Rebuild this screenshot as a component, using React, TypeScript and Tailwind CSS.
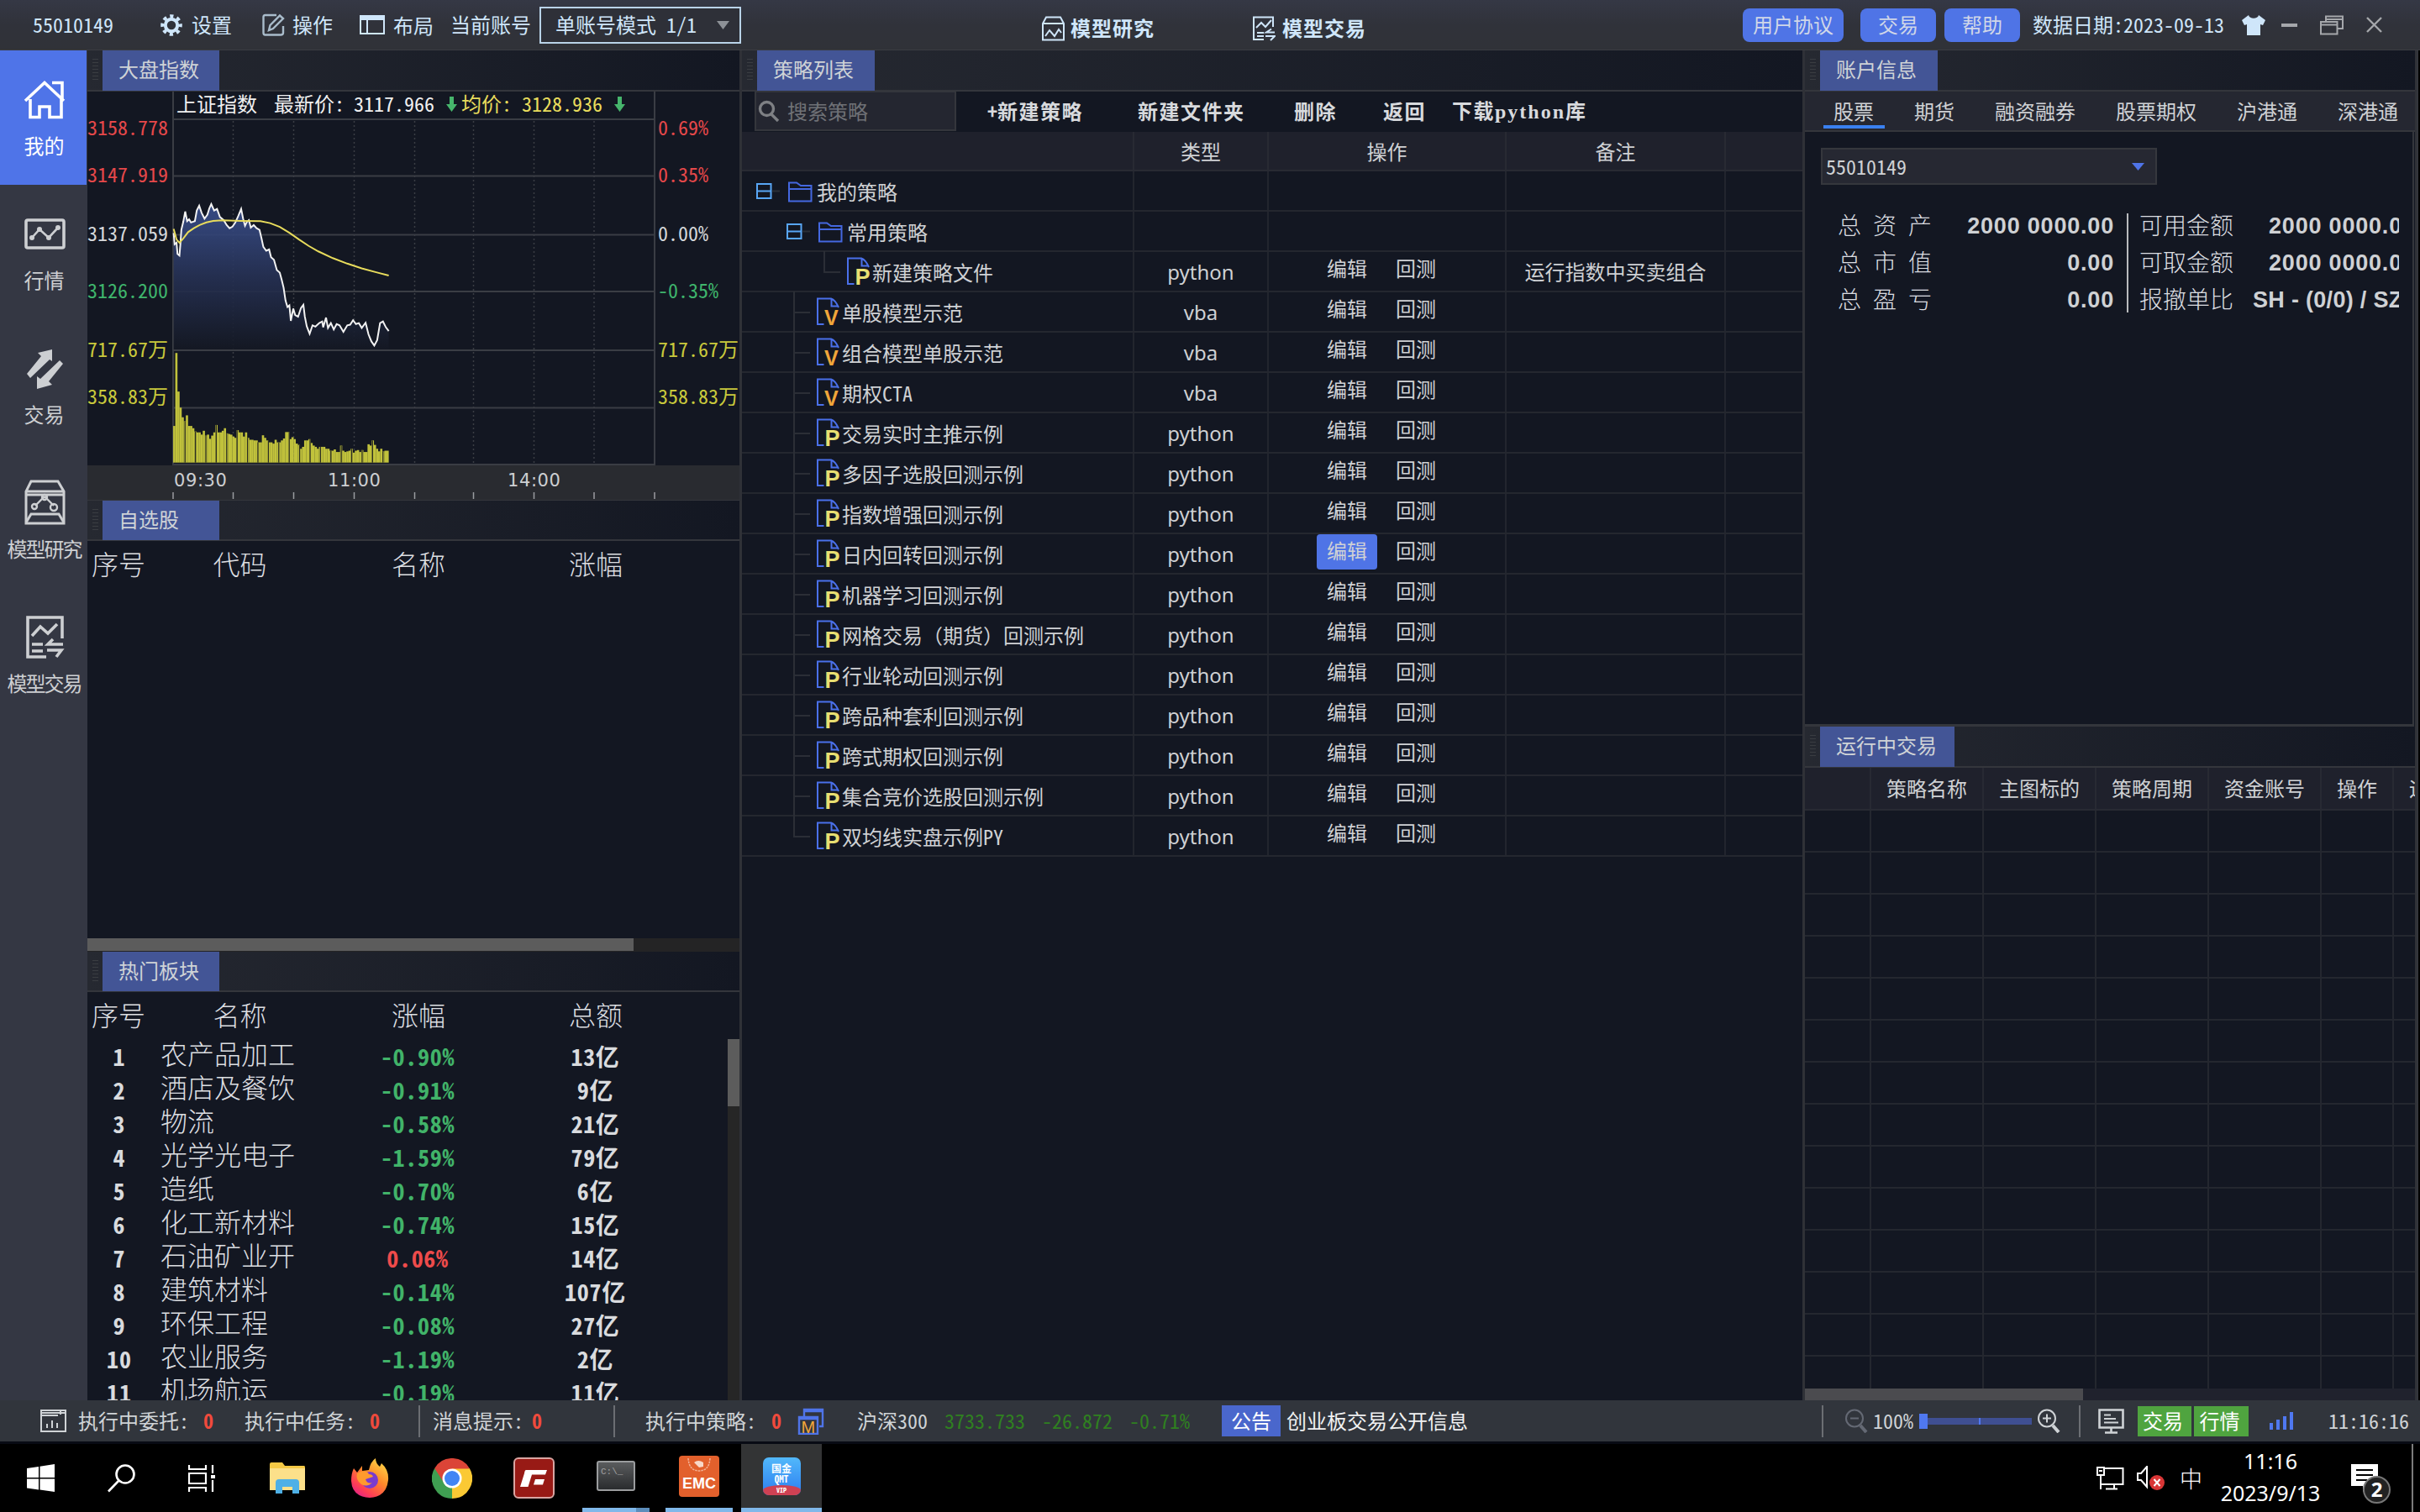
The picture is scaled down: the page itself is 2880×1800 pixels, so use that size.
import React from "react";

const SONG = "font-['Noto_Sans_CJK_SC',sans-serif] [font-feature-settings:'hwid'] font-normal";
const LINE = "bg-[#34363c]";

/* ---------- shared pieces ---------- */

function TitleBar({ text, tab, h = "h-[47px]" }: { text: string; tab: string; h?: string }) {
  return (
    <div className={`flex shrink-0 ${h} border-b-2 border-[#34363c] bg-linear-to-r from-[#262931] to-[#131722]`}>
      <div className="flex w-[18px] shrink-0 items-center justify-center">
        <div className="h-[27px] w-[7px] bg-[repeating-linear-gradient(to_bottom,#3a3d42_0_1px,transparent_1px_4px)]" />
      </div>
      <div className={`-mb-px flex shrink-0 items-center bg-[#435596] pb-[3px] pl-[19px] text-[#cfd3d6] ${tab}`}>
        {text}
      </div>
    </div>
  );
}

/* ---------- top bar ---------- */

function Gear() {
  return (
    <svg width="26" height="26" viewBox="0 0 26 26" fill="none" stroke="#cfe6fa">
      <circle cx="13" cy="13" r="7.2" strokeWidth="4" />
      <circle cx="13" cy="13" r="10.8" strokeWidth="4" strokeDasharray="4.2 4.28" strokeDashoffset="2.1" />
    </svg>
  );
}

function TopBar() {
  const button = "flex h-[40px] items-center justify-center rounded-lg bg-[#4f74e6] pb-px text-[#d0d7e8]";
  return (
    <header className="flex h-[60px] shrink-0 items-center border-b border-[#3a3c42] bg-linear-to-b from-[#353845] via-[#30323a] to-[#303238] text-[#cfe6fa]">
      <span className="ml-[39px] w-[152px]">55010149</span>
      <Gear />
      <span className="ml-[11px] w-[84px]">设置</span>
      <svg width="27" height="27" viewBox="0 0 27 27" fill="none" stroke="#a9bccb" strokeWidth="2.4">
        <path d="M17 2H3.500Q1.500 2 1.500 4V23Q1.500 25.500 3.500 25.500H22Q25 25.500 25 23V15" />
        <path d="M8 20l1.500-6L21 2.500l4 3.500L13 18z" />
      </svg>
      <span className="ml-[9px] w-[80px]">操作</span>
      <svg width="30" height="23" viewBox="0 0 30 23" fill="none" stroke="#cfe6fa" strokeWidth="2">
        <rect x="1" y="1" width="28" height="21" />
        <path d="M1 3h28M1 5h28M9 5v17" />
      </svg>
      <span className="mt-[2px] ml-[10px] w-[68px]">布局</span>
      <span className="w-[106px]">当前账号</span>
      <div className="flex h-[44px] w-[240px] items-center justify-between border-2 border-[#b9d3e8] bg-[#2e3038] pr-[12px] pl-[17px]">
        <span>单账号模式 1/1</span>
        <svg width="15" height="10" viewBox="0 0 15 10">
          <path d="M0 0h15L7.500 10z" fill="#8d9197" />
        </svg>
      </div>
      <svg className="mt-[8px] ml-[358px]" width="27" height="30" viewBox="0 0 27 30" fill="none" stroke="#cfe6fa" strokeWidth="2">
        <path d="M1 9L5 1.500H22L26 9V28.500H1ZM1 9H26" />
        <path d="M4 24l5-7 6 7 5-8 3 4" />
      </svg>
      <span className="mt-[8px] ml-[7px] w-[217px] font-bold tracking-[1px]">模型研究</span>
      <svg className="mt-[8px]" width="27" height="30" viewBox="0 0 27 30" fill="none" stroke="#cfe6fa" strokeWidth="2">
        <path d="M24 13V1.500H1V28H13M4 14l6-6 5 5 7-8" />
        <path d="M5 20h8M5 24h8M26 19.500H16l6-4M15 24h11l-5 5" />
      </svg>
      <span className="mt-[8px] ml-[8px] w-[548px] font-bold tracking-[1px]">模型交易</span>
      <div className={`${button} w-[120px]`}>用户协议</div>
      <div className={`${button} ml-[20px] w-[90px]`}>交易</div>
      <div className={`${button} ml-[10px] w-[90px]`}>帮助</div>
      <span className="ml-[15px] w-[249px]">数据日期:2023-09-13</span>
      <svg width="28" height="24" viewBox="0 0 28 24" fill="#cfe6fa">
        <path d="M8 0l-8 6 3 6 3-1v13h16V11l3 1 3-6-8-6c-1 5-11 5-12 0z" />
      </svg>
      <svg className="ml-[19px]" width="19" height="24" viewBox="0 0 19 24">
        <rect y="10" width="19" height="4" fill="#a5a7ab" />
      </svg>
      <svg className="ml-[27px]" width="28" height="24" viewBox="0 0 28 24" fill="none" stroke="#a5a7ab" strokeWidth="2">
        <path d="M7 7V1.500h20V16h-6M7 5h20M1 8h19.500v14.500H1zM1 11.500h19.500" />
      </svg>
      <svg className="ml-[27px]" width="19" height="19" viewBox="0 0 19 19" stroke="#a5a7ab" strokeWidth="2.4">
        <path d="M1 1l17 17M18 1L1 18" />
      </svg>
    </header>
  );
}

/* ---------- sidebar ---------- */

const NAV: { label: string; icon: React.ReactNode; tight?: boolean }[] = [
  {
    label: "我的",
    icon: (
      <path d="M1 24L24 2.500 47 24M33 2.500H45V22M7 22V43.500H18V31H30V43.500H44V22" strokeWidth="3.600" />
    ),
  },
  {
    label: "行情",
    icon: (
      <g>
        <rect x="2" y="6" width="45" height="33" rx="2" strokeWidth="3.600" />
        <path d="M9 27l9-10 11 10 11-12" strokeWidth="2.600" />
        <g fill="currentColor" stroke="none">
          <circle cx="9" cy="27" r="3" />
          <circle cx="18" cy="17" r="3" />
          <circle cx="29" cy="27" r="3" />
          <circle cx="40" cy="15" r="3" />
        </g>
      </g>
    ),
  },
  {
    label: "交易",
    icon: (
      <g fill="currentColor" stroke="none">
        <path d="M3 29L20 8L16 4L33 0V14L30 12L7 34Z" />
        <path d="M46 17L29 38L33 42L15 47V32L19 35L42 13Z" />
      </g>
    ),
  },
  {
    label: "模型研究",
    tight: true,
    icon: (
      <g strokeWidth="3">
        <path d="M8 -3H40L47 9V47H2V9ZM2 9H47M2 13H47" />
        <path d="M2 46L8 36H41L47 46" />
        <path d="M13 26L23 16L25 16L35 26" strokeWidth="2.400" />
        <circle cx="12" cy="27" r="3" strokeWidth="2.400" />
        <circle cx="24" cy="16" r="3" strokeWidth="2.400" />
        <circle cx="35" cy="28" r="4" strokeWidth="2.400" />
      </g>
    ),
  },
  {
    label: "模型交易",
    tight: true,
    icon: (
      <g strokeWidth="3.600">
        <path d="M45 24V-1H4V46H26" />
        <path d="M9 21l10-11 9 8L39 7" />
        <path d="M9 31H22M9 39H22M46 31H28L34 25M27 38H44L38 46" />
      </g>
    ),
  },
];

function Sidebar() {
  return (
    <nav className="flex w-[104px] shrink-0 flex-col bg-[#343743] text-[#cdcfd2]">
      {NAV.map((n, i) => (
        <div
          key={n.label}
          className={`flex h-[160px] w-[103px] flex-col items-center pl-[2px] ${i === 0 ? "bg-[#4f74e8] text-white" : ""}`}
        >
          <svg className="mt-[36px] overflow-visible" width="48" height="45" viewBox="0 0 48 45" fill="none" stroke="currentColor">
            {n.icon}
          </svg>
          <span className={`mt-[18px] whitespace-nowrap ${n.tight ? "tracking-[-2px]" : ""}`}>{n.label}</span>
        </div>
      ))}
    </nav>
  );
}

/* ---------- index chart ---------- */

const PRICE =
  "360,725 362,760 366,755 368,790 372,795 374,760 376,715 380,690 384,658 388,688 392,682 396,692 404,688 408,655 413,640 418,662 424,680 430,668 434,648 438,635 444,655 450,650 456,675 464,685 470,700 476,710 482,705 488,692 494,672 500,650 504,680 508,702 512,690 516,685 520,708 526,700 532,710 538,715 542,740 546,768 552,780 558,776 562,800 568,808 574,840 580,848 584,870 588,895 592,935 596,955 600,950 603,998 608,960 612,980 618,985 624,958 629,948 632,985 636,1015 642,1038 648,1012 654,1016 662,1005 668,1000 670,1018 676,988 680,1020 686,1005 692,1025 698,1008 704,1012 712,1032 720,1012 726,1010 732,996 738,1008 744,1005 750,1020 758,1004 764,1040 770,1062 776,1075 782,1058 788,1005 794,1000 800,1018 806,1030";
const AVERAGE =
  "360,712 366,745 372,755 380,742 390,722 402,710 414,700 428,692 442,687 460,685 500,687 540,688 560,694 580,706 600,724 620,745 640,765 660,782 690,803 720,820 750,835 780,847 806,857";
const VOLUME = [
  1325, 1098, 1218, 1268, 1298, 1310, 1292, 1325, 1325, 1332, 1342, 1345, 1345, 1352, 1340, 1355, 1352, 1365, 1355, 1345,
  1322, 1345, 1345, 1340, 1332, 1348, 1350, 1352, 1358, 1362, 1338, 1345, 1345, 1358, 1345, 1362, 1368, 1368, 1370, 1370,
  1376, 1376, 1354, 1362, 1370, 1376, 1376, 1380, 1368, 1376, 1376, 1370, 1364, 1344, 1344, 1366, 1360, 1366, 1380, 1384,
  1396, 1390, 1370, 1370, 1366, 1378, 1386, 1390, 1396, 1390, 1390, 1390, 1396, 1396, 1402, 1402, 1398, 1406, 1406, 1386,
  1402, 1406, 1404, 1402, 1396, 1408, 1402, 1400, 1406, 1400, 1406, 1406, 1382, 1386, 1370, 1384, 1396, 1404, 1396, 1404,
  1402, 1402,
];
const GRID_X = [277.500, 349.500, 421.500, 493.500, 563.500, 635.500, 707];
const GRID_Y = [142, 209.500, 279.500, 347, 417, 485.500];
const AXIS: [number, string, string, string][] = [
  [153, "3158.778", "0.69%", "#e5484a"],
  [209, "3147.919", "0.35%", "#e5484a"],
  [279, "3137.059", "0.00%", "#d5d7da"],
  [347, "3126.200", "-0.35%", "#3fb56c"],
  [417, "717.67万", "717.67万", "#c9c93c"],
  [473, "358.83万", "358.83万", "#c9c93c"],
];

function Arrow({ x }: { x: number }) {
  return <path d={`M${x + 4} 115h5v9h4l-6.500 9l-6.500-9h4z`} fill="#46b56c" />;
}

function IndexChart() {
  return (
    <svg className="shrink-0 overflow-visible" width="776" height="487" viewBox="104 109 776 487" fontSize="24">
      <defs>
        <linearGradient id="area" x1="0" y1="0" x2="0" y2="1">
          <stop offset="0" stopColor="#3b5190" />
          <stop offset="0.500" stopColor="#263154" />
          <stop offset="1" stopColor="#141823" />
        </linearGradient>
      </defs>
      <g stroke="#3a3d44" strokeWidth="2" fill="none">
        {GRID_Y.map((y) => (
          <path key={y} d={`M206 ${y}H779`} />
        ))}
        <path d="M206 109V553H779V109" />
        <g strokeDasharray="2 3" strokeWidth="1.500">
          {GRID_X.map((x) => (
            <path key={x} d={`M${x} 144V552`} />
          ))}
        </g>
      </g>
      <g transform="scale(0.574 0.3827)" fill="none">
        <polygon points={`360,1087 ${PRICE} 806,1087`} fill="url(#area)" opacity="0.900" />
        <polyline points={PRICE} stroke="#f2f2f2" strokeWidth="2" vectorEffect="non-scaling-stroke" />
        <polyline points={AVERAGE} stroke="#e8dc5c" strokeWidth="2" vectorEffect="non-scaling-stroke" />
        {VOLUME.map((v, i) => (
          <rect key={i} x={359 + i * 4.380} y={v} width="4.600" height={1439 - v} fill="#c1c23c" />
        ))}
        {Array.from({ length: 20 }, (_, i) => (
          <rect
            key={i}
            x={382.500 + i * 21.600}
            y={VOLUME[5 + Math.round(i * 4.930)]}
            width="2.200"
            height={1439 - VOLUME[5 + Math.round(i * 4.930)]}
            fill="#2c2e22"
          />
        ))}
      </g>
      <g fill="#f0f0f0">
        <text x="210" y="133">上证指数</text>
        <text x="326" y="133">最新价:</text>
        <text x="421" y="133">3117.966</text>
      </g>
      <g fill="#e8dc5c">
        <text x="549" y="133">均价:</text>
        <text x="621" y="133">3128.936</text>
      </g>
      <Arrow x={531} />
      <Arrow x={731} />
      {AXIS.map(([y, l, r, c]) => (
        <g key={y} fill={c}>
          <text x="104" y={y + 8}>{l}</text>
          <text x="783" y={y + 8}>{r}</text>
        </g>
      ))}
      <rect x="104" y="554" width="776" height="41" fill="#292b30" />
      <path d="M104 595.500H880" stroke="#34363c" />
      <g fill="#cdcfd2" fontFamily="DejaVu Sans" fontSize="21" letterSpacing="0.600">
        <text x="207" y="579">09:30</text>
        <text x="390" y="579">11:00</text>
        <text x="604" y="579">14:00</text>
      </g>
      <g stroke="#9b9da0" strokeWidth="1.500">
        {[206, ...GRID_X, 779].map((x) => (
          <path key={x} d={`M${x} 586v8`} />
        ))}
      </g>
    </svg>
  );
}

/* ---------- left column ---------- */

function ListHeader({ cells }: { cells: string[] }) {
  return (
    <div className="flex h-[56px] shrink-0 items-center pb-[3px] text-center text-[32px] font-light text-[#dcdee1]">
      <span className="w-[74px]">{cells[0]}</span>
      <span className="w-[215px]">{cells[1]}</span>
      <span className="w-[210px]">{cells[2]}</span>
      <span className="w-[212px]">{cells[3]}</span>
    </div>
  );
}

const SECTORS: [string, string, string][] = [
  ["农产品加工", "-0.90%", "13亿"],
  ["酒店及餐饮", "-0.91%", "9亿"],
  ["物流", "-0.58%", "21亿"],
  ["光学光电子", "-1.59%", "79亿"],
  ["造纸", "-0.70%", "6亿"],
  ["化工新材料", "-0.74%", "15亿"],
  ["石油矿业开", "0.06%", "14亿"],
  ["建筑材料", "-0.14%", "107亿"],
  ["环保工程", "-0.08%", "27亿"],
  ["农业服务", "-1.19%", "2亿"],
  ["机场航运", "-0.19%", "11亿"],
];

function LeftColumn() {
  return (
    <section className="flex w-[776px] shrink-0 flex-col overflow-hidden bg-[#131722]">
      <TitleBar text="大盘指数" tab="w-[139px]" h="h-[49px]" />
      <IndexChart />
      <TitleBar text="自选股" tab="w-[139px]" h="h-[48px]" />
      <ListHeader cells={["序号", "代码", "名称", "涨幅"]} />
      <div className="flex-1" />
      <div className="h-[16px] shrink-0 bg-[#242425]">
        <div className="h-[15px] w-[650px] bg-[#5c5c5c]" />
      </div>
      <TitleBar text="热门板块" tab="w-[139px]" h="h-[48px]" />
      <ListHeader cells={["序号", "名称", "涨幅", "总额"]} />
      <div className="flex h-[430px] shrink-0 overflow-hidden">
        <div className="w-[762px]">
          {SECTORS.map(([name, pct, sum], i) => (
            <div
              key={name}
              className="flex h-[40px] items-center text-center text-[28px] leading-[32px] font-bold text-[#d9dbde]"
            >
              <span className="w-[76px] tracking-[1px]">{i + 1}</span>
              <span className="-mt-[9px] w-[212px] pl-[11px] text-left text-[32px] font-light text-[#dcdee1]">{name}</span>
              <span className={`w-[210px] tracking-[0.700px] ${pct[0] === "-" ? "text-[#41b369]" : "text-[#ee4b4b]"}`}>
                {pct}
              </span>
              <span className="w-[213px] tracking-[0.700px]">{sum}</span>
            </div>
          ))}
        </div>
        <div className="w-[14px] bg-[#262626]">
          <div className="h-[80px] w-[14px] bg-[#5c5c5c]" />
        </div>
      </div>
    </section>
  );
}

/* ---------- strategy table ---------- */

function Toggle() {
  return (
    <svg className="shrink-0" width="28" height="20" viewBox="0 0 28 20" fill="none" stroke="#58a6f5" strokeWidth="2">
      <path d="M1 1h16.500v17H1zM1 9.500h16.500" />
      <path d="M19 9.500h9" stroke="#2b2e36" />
    </svg>
  );
}

function Folder() {
  return (
    <svg className="shrink-0" width="29" height="25" viewBox="0 0 29 25" fill="none" stroke="#4468e0" strokeWidth="2">
      <path d="M1 23.500V1.500H10L15 5H27.500V23.500ZM1 9H27.500" />
    </svg>
  );
}

function FileIcon({ py }: { py: boolean }) {
  return (
    <svg className="shrink-0 overflow-visible" width="28" height="34" viewBox="0 0 28 34" fill="none" stroke="#4a70ea" strokeWidth="2">
      <path d="M8.500 32H1V1.500H17Q22 3 26 12M17.500 2V10.500H26" />
      <text
        x={py ? 9.500 : 9}
        y={py ? 33 : 32.500}
        stroke="none"
        fill={py ? "#e8df72" : "#f0a63a"}
        fontFamily="Liberation Sans"
        fontWeight="700"
        fontSize={py ? 27 : 25}
      >
        {py ? "P" : "V"}
      </text>
    </svg>
  );
}

const STRATEGIES: [string, string][] = [
  ["单股模型示范", "vba"],
  ["组合模型单股示范", "vba"],
  ["期权CTA", "vba"],
  ["交易实时主推示例", "python"],
  ["多因子选股回测示例", "python"],
  ["指数增强回测示例", "python"],
  ["日内回转回测示例", "python"],
  ["机器学习回测示例", "python"],
  ["网格交易（期货）回测示例", "python"],
  ["行业轮动回测示例", "python"],
  ["跨品种套利回测示例", "python"],
  ["跨式期权回测示例", "python"],
  ["集合竞价选股回测示例", "python"],
  ["双均线实盘示例PY", "python"],
];

function Row({ tree, type, note, active }: { tree: React.ReactNode; type?: string; note?: string; active?: boolean }) {
  const cell = "flex h-full items-center border-r-2 border-[#22252e]";
  return (
    <div className="flex h-[48px] border-b-2 border-[#24272f]">
      <div className={`${cell} w-[467px]`}>{tree}</div>
      <div className={`${cell} w-[160px] justify-center pt-[2px] font-['Noto_Sans',sans-serif]`}>{type}</div>
      <div className={`${cell} w-[283px]`}>
        {type && (
          <>
            <span
              className={`-mt-[4px] ml-[57px] flex h-[42px] w-[72px] items-center justify-center rounded-sm pb-[3px] ${active ? "bg-[#4f74e6]" : ""}`}
            >
              编辑
            </span>
            <span className="-mt-[7px] ml-[22px]">回测</span>
          </>
        )}
      </div>
      <div className={`${cell} w-[261px] justify-center`}>{note}</div>
    </div>
  );
}

function Branch({ last }: { last?: boolean }) {
  return (
    <svg className="shrink-0" width="22" height="48" viewBox="0 0 22 48" stroke="#2b2e36" strokeWidth="2">
      <path d={last ? "M1 0V25H20" : "M1 0V48M1 25H20"} fill="none" />
    </svg>
  );
}

function MiddleColumn() {
  const head = "flex h-full items-center justify-center border-r-2 border-[#282a33] pt-[2px]";
  return (
    <section className="flex w-[1268px] shrink-0 flex-col border-x-[3px] border-[#2f3137] bg-[#131722] text-[#cfd1d4]">
      <TitleBar text="策略列表" tab="w-[140px]" h="h-[49px]" />
      <div className="flex h-[48px] shrink-0 items-center pb-[2px] font-bold tracking-[1.500px] text-[#d8dadd]">
        <div className="ml-[15px] flex h-[48px] w-[240px] items-center border-2 border-[#34363c] bg-[#242630] font-normal tracking-normal text-[#6f7176]">
          <svg className="ml-[2px]" width="26" height="26" viewBox="0 0 26 26" fill="none" stroke="#7e8084" strokeWidth="3.400">
            <circle cx="10.500" cy="10.500" r="8" />
            <path d="M16 17l8 8" />
          </svg>
          <span className="ml-[9px]">搜索策略</span>
        </div>
        <span className="ml-[37px] w-[179px] whitespace-nowrap">
          <span className="tracking-normal">+</span>新建策略
        </span>
        <span className="w-[186px]">新建文件夹</span>
        <span className="w-[106px]">删除</span>
        <span className="w-[82px]">返回</span>
        <span className="whitespace-nowrap">
          下载<span className="font-['Liberation_Serif',serif] tracking-[2px]">python</span>库
        </span>
      </div>
      <div className="flex h-[47px] shrink-0 border-b-2 border-[#282a33] bg-[#1f212c]">
        <div className={`${head} w-[467px]`} />
        <div className={`${head} w-[160px]`}>类型</div>
        <div className={`${head} w-[283px]`}>操作</div>
        <div className={`${head} w-[261px]`}>备注</div>
      </div>
      <Row
        tree={
          <div className="flex items-center pt-[3px] pl-[17px]">
            <Toggle />
            <span className="w-[10px]" />
            <Folder />
            <span className="-mt-px ml-[5px]">我的策略</span>
          </div>
        }
      />
      <Row
        tree={
          <div className="flex items-center pt-[3px] pl-[53px]">
            <Toggle />
            <span className="w-[10px]" />
            <Folder />
            <span className="-mt-px ml-[5px]">常用策略</span>
          </div>
        }
      />
      <Row
        type="python"
        note="运行指数中买卖组合"
        tree={
          <div className="flex items-center pl-[97px]">
            <Branch last />
            <span className="w-[6px]" />
            <FileIcon py />
            <span className="mt-[2px] ml-[2px]">新建策略文件</span>
          </div>
        }
      />
      {STRATEGIES.map(([name, type], i) => (
        <Row
          key={name}
          type={type}
          active={i === 6}
          tree={
            <div className="flex items-center pl-[61px]">
              <Branch last={i === STRATEGIES.length - 1} />
              <span className="w-[6px]" />
              <FileIcon py={type === "python"} />
              <span
                className={`mt-[2px] ml-[2px] whitespace-nowrap ${name.includes("（") ? "[font-feature-settings:normal]" : ""}`}
              >
                {name}
              </span>
            </div>
          }
        />
      ))}
    </section>
  );
}

/* ---------- right column ---------- */

const STATS: [string, string, string, string][] = [
  ["总资产", "2000 0000.00", "可用金额", "2000 0000.00"],
  ["总市值", "0.00", "可取金额", "2000 0000.00"],
  ["总盈亏", "0.00", "报撤单比", "SH - (0/0) / SZ - (0/0)"],
];
const RUN_COLS: [string, string][] = [
  ["", "w-[79px]"],
  ["策略名称", "w-[134px]"],
  ["主图标的", "w-[134px]"],
  ["策略周期", "w-[134px]"],
  ["资金账号", "w-[134px]"],
  ["操作", "w-[86px]"],
];

function RightColumn() {
  const num = "font-['Liberation_Sans',sans-serif] text-[27px] font-bold whitespace-nowrap pt-[2px]";
  return (
    <section className="flex w-[728px] shrink-0 flex-col overflow-hidden border-r-2 border-[#2f3137] bg-[#131722] text-[#cfd1d4]">
      <TitleBar text="账户信息" tab="w-[140px]" h="h-[49px]" />
      <div className="flex h-[48px] shrink-0 gap-[48px] border-b-2 border-[#34363c] bg-[#252731] pl-[34px] whitespace-nowrap">
        {["股票", "期货", "融资融券", "股票期权", "沪港通", "深港通"].map((t, i) => (
          <div key={t} className="relative flex items-center">
            {t}
            {i === 0 && <div className="absolute bottom-[2px] -left-[12px] h-[4px] w-[73px] bg-[#3a80f0]" />}
          </div>
        ))}
      </div>
      <div className="mr-px h-[708px] shrink-0 border-r-2 border-b-[3px] border-[#34363c] pt-[19px] pl-[19px]">
        <div className="flex h-[44px] w-[400px] items-center justify-between border-2 border-[#35373d] bg-[#262832] pr-[13px] pl-[4px]">
          <span>55010149</span>
          <svg width="15" height="9" viewBox="0 0 15 9">
            <path d="M0 0h15L7.500 9z" fill="#4f74e8" />
          </svg>
        </div>
        <div className="mt-[26px] flex w-[688px] overflow-hidden">
          <div className="w-[349px] pl-[20px]">
            {STATS.map(([l, v]) => (
              <div key={l} className="flex h-[44px] items-center justify-between">
                <span className="text-[28px] font-light tracking-[14px] text-[#dcdee1]">{l}</span>
                <span className={`${num} tracking-[0.800px]`}>{v}</span>
              </div>
            ))}
          </div>
          <div className="mt-[8px] ml-[15px] h-[118px] w-[2px] shrink-0 bg-[#b9bbbe]" />
          <div className="w-[322px] overflow-hidden pl-[13px]">
            {STATS.map(([l, , r, v], i) => (
              <div key={l} className="flex h-[44px] items-center">
                <span className="shrink-0 text-[28px] font-light text-[#dcdee1]">{r}</span>
                <span className={`${num} ${i === 2 ? "ml-[23px] tracking-[0.300px]" : "ml-[42px] tracking-[0.800px]"}`}>{v}</span>
              </div>
            ))}
          </div>
        </div>
      </div>
      <TitleBar text="运行中交易" tab="w-[160px]" h="h-[49px]" />
      <div className="flex h-[51px] shrink-0 border-b-2 border-[#282a33] bg-[#1f212c]">
        {RUN_COLS.map(([t, w]) => (
          <div key={t} className={`flex shrink-0 items-center justify-center border-r-2 border-[#282a33] ${w}`}>
            {t}
          </div>
        ))}
        <div className="flex w-[27px] items-center overflow-hidden pl-[18px] whitespace-nowrap">运行</div>
      </div>
      <div className="flex-1 overflow-hidden">
        {Array.from({ length: 14 }, (_, i) => (
          <div key={i} className="flex h-[50px] border-b-2 border-[#24272f]">
            {RUN_COLS.map(([t, w]) => (
              <div key={t} className={`shrink-0 border-r-2 border-[#24272f] ${w}`} />
            ))}
          </div>
        ))}
      </div>
      <div className="h-[14px] shrink-0 bg-[#20222d]">
        <div className="h-[14px] w-[331px] bg-[#4b4b4f]" />
      </div>
    </section>
  );
}

/* ---------- status bar ---------- */

function Magnifier({ plus }: { plus?: boolean }) {
  const c = plus ? "#cfd3d6" : "#646974";
  return (
    <svg width="27" height="29" viewBox="0 0 27 29" fill="none" stroke={c} strokeWidth="2">
      <circle cx="11" cy="11.500" r="10" />
      <path d="M6 11.500h10" />
      {plus && <path d="M11 6.500v10" />}
      <path d="M18 20l7 8" strokeWidth="4" />
    </svg>
  );
}

function StatusBar() {
  const zero = "font-bold text-[#f04a3c]";
  const sep = "h-[38px] w-[2px] bg-[#6b6e73]";
  return (
    <footer className="flex h-[49px] shrink-0 items-center bg-[#31353c] whitespace-nowrap text-[#cfd3d6]">
      <svg className="ml-[48px]" width="31" height="27" viewBox="0 0 31 27" fill="none" stroke="#cfd3d6" strokeWidth="2">
        <path d="M1 1h29v25H1zM1 4h29M1 7h20M8 22v-5M14 22v-9M20 22v-6" />
        <path d="M24 2v4" />
      </svg>
      <span className="ml-[14px] w-[149px]">执行中委托:</span>
      <span className={`${zero} w-[49px]`}>0</span>
      <span className="w-[149px]">执行中任务:</span>
      <span className={`${zero} w-[58px]`}>0</span>
      <div className={sep} />
      <span className="ml-[15px] w-[118px]">消息提示:</span>
      <span className={`${zero} w-[97px]`}>0</span>
      <div className={sep} />
      <span className="ml-[36px] w-[150px]">执行中策略:</span>
      <span className={`${zero} w-[31px]`}>0</span>
      <svg width="32" height="32" viewBox="0 0 32 32" fill="none" stroke="#4f74e8" strokeWidth="2.400">
        <path d="M8 10V2H30V22H26M8 4H30" />
        <path d="M2 11H24V31H2zM2 13H24" />
        <text x="4.500" y="30" fontSize="20" fontFamily="Liberation Sans" fill="#f0a63a" stroke="none">M</text>
      </svg>
      <span className="ml-[39px] w-[104px]">沪深300</span>
      <span className="w-[116px] text-[#2f8020]">3733.733</span>
      <span className="w-[104px] text-[#2f8020]">-26.872</span>
      <span className="w-[110px] text-[#2f8020]">-0.71%</span>
      <div className="flex h-[37px] w-[70px] items-center justify-center bg-[#4a67cc] text-white">公告</div>
      <span className="ml-[7px] w-[637px] text-[#f0f1f2]">创业板交易公开信息</span>
      <div className={sep} />
      <div className="ml-[26px] flex w-[304px] items-center">
        <Magnifier />
        <span className="ml-[6px] w-[55px]">100%</span>
        <div className="h-[18px] w-[10px] bg-[#4f78f0]" />
        <div className="flex h-[8px] w-[124px] items-center justify-center bg-[#3f4f92]">
          <div className="h-[8px] w-[2px] bg-[#4f78f0]" />
        </div>
        <span className="w-[7px]" />
        <Magnifier plus />
      </div>
      <span className="-ml-[26px]" />
      <div className={sep} />
      <svg className="ml-[21px]" width="31" height="30" viewBox="0 0 31 30" fill="none" stroke="#cfd3d6" strokeWidth="2.600">
        <path d="M1.500 1.500h28v21h-28zM8 28.500h15M15.500 23v5" />
        <path d="M7 7.500h8M7 12h14M7 16.500h17" strokeWidth="2" />
      </svg>
      <div className="ml-[16px] flex h-[36px] w-[64px] items-center justify-center bg-[#4fa43f] pr-[4px] text-white">交易</div>
      <div className="ml-[3px] flex h-[36px] w-[65px] items-center justify-center bg-[#4fa43f] pr-[4px] text-white">行情</div>
      <svg className="ml-[25px]" width="29" height="21" viewBox="0 0 29 21" fill="#4f78f0">
        <rect y="13" width="4" height="8" />
        <rect x="8" y="9" width="4" height="12" />
        <rect x="16" y="5" width="4" height="16" />
        <rect x="24" y="0" width="4" height="21" />
      </svg>
      <span className="ml-[41px]">11:16:16</span>
    </footer>
  );
}

/* ---------- taskbar ---------- */

function Taskbar() {
  const slot = "flex h-full items-center justify-center";
  return (
    <div className="flex h-[84px] shrink-0 border-t-[3px] border-[#080b14] bg-black font-['Noto_Sans',sans-serif] text-white">
      <div className={`${slot} w-[97px]`}>
        <svg width="33" height="33" viewBox="0 0 33 33" fill="#fff">
          <path d="M0 5l14-2v13H0zM15.500 2.700L33 0v16H15.500zM0 17.500h14v13L0 28.500zM15.500 17.500H33V33l-17.500-2.500z" />
        </svg>
      </div>
      <div className={`${slot} w-[94px]`}>
        <svg width="33" height="34" viewBox="0 0 33 34" fill="none" stroke="#fff" strokeWidth="2.600">
          <circle cx="21" cy="12" r="10.500" />
          <path d="M13.500 19.500L1 32.500" />
        </svg>
      </div>
      <div className={`${slot} w-[98px]`}>
        <svg width="33" height="32" viewBox="0 0 33 32" fill="none" stroke="#fff" strokeWidth="2.200">
          <path d="M1 0v5h20V0M1 10h20v12H1zM1 32v-5h20v5M29 0v10M29 18v14" />
          <rect x="27" y="12" width="5" height="4" fill="#fff" stroke="none" />
        </svg>
      </div>
      <div className={`${slot} w-[106px]`}>
        <svg width="44" height="38" viewBox="0 0 44 38">
          <path d="M1 2q0-2 2-2h13l3 4h23q1 0 1 2v27H1z" fill="#f5c945" />
          <path d="M1 7h42v26H1z" fill="#fce08a" />
          <path d="M8 37V24q0-4 4-4h20q4 0 4 4v13h-8v-8H16v8z" fill="#4eb0e6" />
        </svg>
      </div>
      <div className={`${slot} w-[90px]`}>
        <svg width="46" height="48" viewBox="0 0 46 48">
          <defs>
            <linearGradient id="fox" x1="0.900" y1="0" x2="0.200" y2="1">
              <stop offset="0" stopColor="#ffe14a" />
              <stop offset="0.450" stopColor="#ff8a2a" />
              <stop offset="0.800" stopColor="#ff3d55" />
              <stop offset="1" stopColor="#e0218a" />
            </linearGradient>
          </defs>
          <path d="M4 12l4 5 6-8 0 6 8-1Q24 4 30 0q0 6 5 10l2-4q9 8 8 20-2 20-22 21Q2 46 1 27q0-9 3-15z" fill="url(#fox)" />
          <circle cx="23" cy="26" r="10" fill="#7a3bd0" />
          <path d="M8 18q10-6 14 1 4 0 5 3l-9 3q2 6 8 4-6 6-13 2-7-5-5-13z" fill="#ff9a2e" />
        </svg>
      </div>
      <div className={`${slot} w-[105px]`}>
        <svg width="48" height="48" viewBox="0 0 48 48">
          <path d="M24 24L3.200 12A24 24 0 0 1 44.800 12z" fill="#db4437" />
          <path d="M24 24L24 48A24 24 0 0 1 3.200 12z" fill="#3f9f52" />
          <path d="M24 24L44.800 12A24 24 0 0 1 24 48z" fill="#fbc934" />
          <path d="M24 12.500H45L33.500 29.500z" fill="#fbc934" />
          <path d="M3.200 12L14.500 29.500 18 14z" fill="#db4437" />
          <circle cx="24" cy="24" r="11.500" fill="#fff" />
          <circle cx="24" cy="24" r="9" fill="#4285f4" />
        </svg>
      </div>
      <div className={`${slot} w-[94px]`}>
        <svg className="-ml-[4px]" width="49" height="49" viewBox="0 0 49 49">
          <rect x="1" y="1" width="47" height="47" rx="5" fill="#981a15" stroke="#d9a5a2" strokeWidth="2" />
          <path d="M15 15H40L38 20.500H22L17.500 35H8L13 19Q13.500 15 15 15Z" fill="#fff" />
          <path d="M26 26H37L35 32.500H24Z" fill="#fff" />
        </svg>
      </div>
      <div className="flex w-[98px] flex-col items-center">
        <div className="flex h-[76px] items-center">
          <div className="h-[36px] w-[46px] rounded-[3px] border-2 border-[#9a9c9e] bg-linear-to-b from-[#5a5c5e] to-[#2a2c2e] pl-[3px] font-['Liberation_Mono',monospace] text-[11px] leading-[22px] text-[#a0a0a0]">
            C:\_
          </div>
        </div>
        <div className="flex h-[5px] w-[80px] bg-[#5c8dbb]">
          <div className="h-full w-[64px] bg-[#80b8ea]" />
        </div>
      </div>
      <div className="flex w-[100px] flex-col items-center">
        <div className="flex h-[76px] items-center">
          <div className="flex h-[49px] w-[48px] flex-col items-center justify-end rounded-[4px] bg-[#e2602c] pb-[4px] font-['Liberation_Sans',sans-serif] text-[18px] leading-[24px] font-bold">
            <svg width="30" height="18" viewBox="0 0 30 18" fill="none" stroke="#f3b295" strokeWidth="1.500">
              <path d="M2 0q1 15 13 15t13-15" strokeDasharray="2.500 1" />
              <path d="M9 5q5-4 11 0v5l-5 1z" fill="#f8d8c8" stroke="none" />
            </svg>
            EMC
          </div>
        </div>
        <div className="h-[5px] w-[80px] bg-[#80b8ea]" />
      </div>
      <div className="flex w-[96px] flex-col items-center bg-[#333435]">
        <div className="flex h-[76px] items-center">
          <div className="flex h-[45px] w-[45px] flex-col items-center overflow-hidden rounded-[7px] bg-linear-to-b from-[#52b8fa] to-[#2f7df0] font-['Noto_Sans_CJK_SC',sans-serif] font-bold">
            <span className="mt-[7px] text-[12px] leading-[12px]">国金</span>
            <span className="text-[11px] leading-[12px]">QMT</span>
            <span className="mt-[2px] flex h-[13px] w-[45px] items-center justify-center rounded-t-[50%] bg-[#cf4153] text-[8px] leading-none">
              VIP
            </span>
          </div>
        </div>
        <div className="h-[5px] w-full bg-[#80b8ea]" />
      </div>
      <div className="flex-1" />
      <div className="flex h-full items-center">
        <svg width="33" height="28" viewBox="0 0 33 28" fill="none" stroke="#fff" strokeWidth="2">
          <path d="M10 2H31.500V21H6M21 21v5M11 26.500H25M5 10V27" />
          <path d="M1 1h8v9H1zM3 5h4" />
        </svg>
        <svg className="ml-[15px]" width="34" height="30" viewBox="0 0 34 30" fill="none" stroke="#fff" strokeWidth="2">
          <path d="M1 9h4l7-8v24l-7-8H1z" />
          <circle cx="24" cy="20" r="9" fill="#d93636" stroke="none" />
          <path d="M20.500 16l7 8M27.500 16l-7 8" />
        </svg>
        <span className="ml-[17px] font-['Noto_Sans_CJK_SC',sans-serif] text-[27px] leading-none font-light">中</span>
        <div className="-mt-[4px] ml-[16px] flex w-[130px] flex-col items-center text-[25px] leading-[38px]">
          <span>11:16</span>
          <span>2023/9/13</span>
        </div>
        <div className="relative ml-[31px] w-[72px]">
          <svg width="33" height="34" viewBox="0 0 33 34">
            <path d="M0 0h32v26H20l-6 7v-7H0z" fill="#fff" />
            <path d="M6 7h20M6 13h20M6 19h13" stroke="#000" strokeWidth="2" />
          </svg>
          <span className="absolute top-[14px] left-[14px] flex size-[33px] items-center justify-center rounded-full border-2 border-[#777] bg-[#222] text-[24px] leading-none font-bold">
            2
          </span>
        </div>
        <div className="mr-[8px] h-full w-[2px] bg-[#7c7c7c]" />
      </div>
    </div>
  );
}

export default function App() {
  return (
    <div className={`flex h-[1800px] w-[2880px] flex-col overflow-hidden bg-[#131722] text-[24px] leading-[1.2] ${SONG}`}>
      <TopBar />
      <main className="flex h-[1607px] shrink-0">
        <Sidebar />
        <LeftColumn />
        <MiddleColumn />
        <RightColumn />
        <div className={`w-[2px] ${LINE}`} />
        <div className="w-[2px] bg-black" />
      </main>
      <StatusBar />
      <Taskbar />
    </div>
  );
}
